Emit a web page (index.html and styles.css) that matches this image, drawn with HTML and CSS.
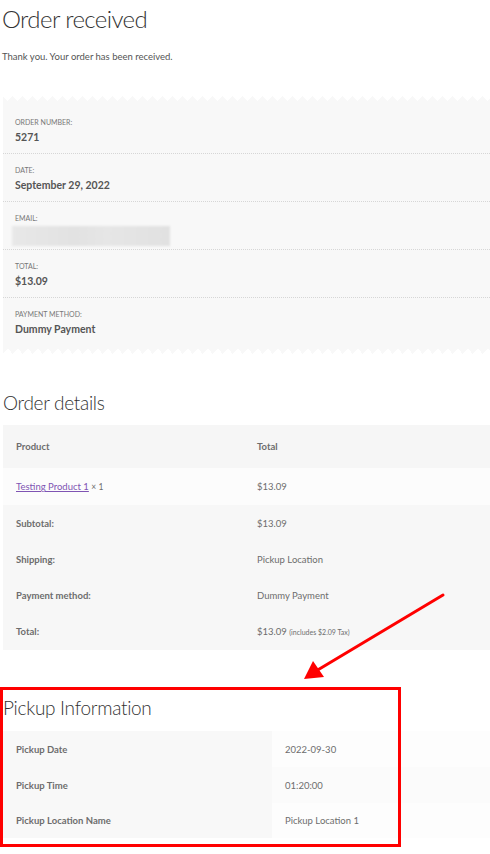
FILE: index.html
```html
<!DOCTYPE html>
<html lang="en">
<head>
    <meta charset="UTF-8">
    <meta name="viewport" content="width=device-width, initial-scale=1.0">
    <title>Order received</title>
    <link rel="stylesheet" href="styles.css">
</head>
<body>
    <main class="page">
        <h1 class="page-title">Order received</h1>
        <p class="thanks">Thank you. Your order has been received.</p>

        <div class="overview">
            <ul class="overview-list">
                <li>
                    <span class="label">Order number:</span>
                    <strong>5271</strong>
                </li>
                <li>
                    <span class="label">Date:</span>
                    <strong>September 29, 2022</strong>
                </li>
                <li>
                    <span class="label">Email:</span>
                    <div class="blurred"></div>
                </li>
                <li>
                    <span class="label">Total:</span>
                    <strong>$13.09</strong>
                </li>
                <li>
                    <span class="label">Payment method:</span>
                    <strong>Dummy Payment</strong>
                </li>
            </ul>
        </div>

        <h2 class="section-title details-title">Order details</h2>
        <table class="details">
            <thead>
                <tr>
                    <th>Product</th>
                    <th>Total</th>
                </tr>
            </thead>
            <tbody>
                <tr>
                    <td><a href="#">Testing Product 1</a> <span class="qty">× 1</span></td>
                    <td>$13.09</td>
                </tr>
            </tbody>
            <tfoot>
                <tr>
                    <th>Subtotal:</th>
                    <td>$13.09</td>
                </tr>
                <tr>
                    <th>Shipping:</th>
                    <td>Pickup Location</td>
                </tr>
                <tr>
                    <th>Payment method:</th>
                    <td>Dummy Payment</td>
                </tr>
                <tr>
                    <th>Total:</th>
                    <td>$13.09 <small class="tax">(includes $2.09 Tax)</small></td>
                </tr>
            </tfoot>
        </table>

        <section class="pickup">
            <h2 class="section-title">Pickup Information</h2>
            <table class="pickup-table">
                <tr>
                    <th>Pickup Date</th>
                    <td>2022-09-30</td>
                </tr>
                <tr>
                    <th>Pickup Time</th>
                    <td>01:20:00</td>
                </tr>
                <tr>
                    <th>Pickup Location Name</th>
                    <td>Pickup Location 1</td>
                </tr>
            </table>
        </section>

        <!-- annotation -->
        <div class="highlight"></div>
        <svg class="arrow" width="490" height="854" viewBox="0 0 490 854">
            <line x1="443" y1="595" x2="316" y2="671" stroke="#ff0000" stroke-width="3" stroke-linecap="round"/>
            <polygon points="304,679 313,661 324,677" fill="#ff0000"/>
        </svg>
    </main>
</body>
</html>
```

FILE: styles.css
```css
* {
    margin: 0;
    padding: 0;
    box-sizing: border-box;
}

body {
    font-family: Lato, "Liberation Sans", sans-serif;
    color: #6d6d6d;
    background-color: #fff;
}

.page {
    position: relative;
    width: 490px;
    height: 854px;
    padding-left: 3px;
    overflow: hidden;
}

.page-title {
    font-size: 24px;
    font-weight: 300;
    line-height: 32px;
    letter-spacing: -0.6px;
    color: #333;
    margin: 3px 0 0 -1px;
}

.thanks {
    font-size: 9.5px;
    line-height: 14px;
    color: #555;
    margin-top: 15px;
    margin-left: -1px;
}

/* Order overview with zigzag edges */
.overview {
    margin-top: 32px;
}

.overview::before,
.overview::after {
    content: "";
    display: block;
    height: 5px;
    background-size: 10px 10px;
}

.overview::before {
    background-image: linear-gradient(45deg, #f8f8f8 50%, transparent 50%),
                      linear-gradient(-45deg, #f8f8f8 50%, transparent 50%);
    background-position: left top;
}

.overview::after {
    background-image: linear-gradient(135deg, #f8f8f8 50%, transparent 50%),
                      linear-gradient(-135deg, #f8f8f8 50%, transparent 50%);
    background-position: left bottom;
}

.overview-list {
    list-style: none;
    background-color: #f8f8f8;
    padding: 5px 0 4px;
}

.overview-list li {
    padding: 10px 12px 7px;
    border-bottom: 1px dotted #d6d6d6;
}

.overview-list li:last-child {
    border-bottom: none;
}

.overview-list .label {
    display: block;
    font-size: 7px;
    line-height: 12px;
    text-transform: uppercase;
    color: #777;
}

.overview-list strong {
    display: block;
    font-size: 10.5px;
    line-height: 18px;
    font-weight: 700;
    color: #555;
}

.blurred {
    width: 158px;
    height: 20px;
    margin: 2px 0 -4px -3px;
    background: linear-gradient(90deg, #e8e8e8, #e2e2e2 40%, #e6e6e6 60%, #e1e1e1);
    filter: blur(1px);
}

/* Tables */
.section-title {
    font-size: 19px;
    font-weight: 300;
    line-height: 24px;
    letter-spacing: -0.3px;
    color: #333;
}

.details-title {
    margin-top: 37px;
}

.details {
    margin-top: 10px;
}

.details,
.pickup-table {
    width: 487px;
    border-collapse: collapse;
    table-layout: fixed;
    font-size: 9.5px;
}

.details th,
.details td,
.pickup-table th,
.pickup-table td {
    text-align: left;
    padding: 0 13px;
    vertical-align: middle;
}

.details th {
    font-weight: 700;
    color: #6d6d6d;
}

.details th:first-child,
.details td:first-child {
    width: 241px;
}

.details thead th {
    height: 43px;
    background-color: #f6f6f6;
}

.details tbody td {
    height: 37px;
    background-color: #fcfcfc;
}

.details tfoot th,
.details tfoot td {
    height: 36px;
    background-color: #f7f7f7;
}

.details tfoot tr:last-child th,
.details tfoot tr:last-child td {
    height: 37px;
}

.details a {
    color: #7f54b3;
    text-decoration: underline;
}

.qty {
    font-size: 8.5px;
}

.tax {
    font-size: 7px;
}

.pickup h2 {
    margin-top: 46px;
}

.pickup-table {
    margin-top: 11px;
}

.pickup-table th {
    width: 269px;
    height: 36px;
    font-weight: 700;
    background-color: #f8f8f8;
}

.pickup-table td {
    background-color: #fdfdfd;
}

.pickup-table tr:nth-child(2) td {
    background-color: #fbfbfb;
}

.pickup-table tr:last-child th {
    height: 35px;
}

/* Annotation overlay */
.highlight {
    position: absolute;
    left: 0;
    top: 687px;
    width: 401px;
    height: 160px;
    border: 3px solid #ff0000;
}

.arrow {
    position: absolute;
    left: 0;
    top: 0;
    pointer-events: none;
}
```
